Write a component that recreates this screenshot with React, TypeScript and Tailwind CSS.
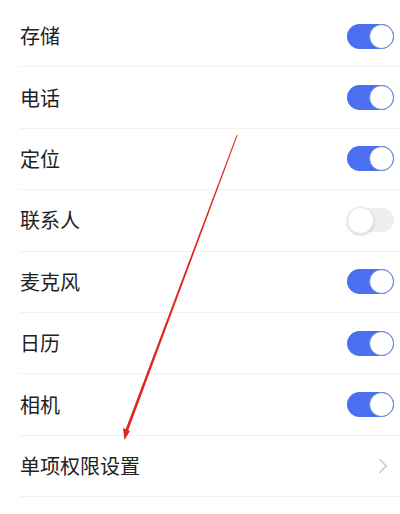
import { ChevronRight } from "lucide-react"

const items = [
  { name: "存储", on: true },
  { name: "电话", on: true },
  { name: "定位", on: true },
  { name: "联系人", on: false },
  { name: "麦克风", on: true },
  { name: "日历", on: true },
  { name: "相机", on: true },
]

function Toggle({ on }: { on: boolean }) {
  if (on) {
    return (
      <div className="flex h-[25px] w-[47px] items-center justify-end rounded-full bg-[#4a6ff0]">
        <div className="h-[25px] w-[25px] rounded-full border-[1.5px] border-[#6a83d6] bg-white" />
      </div>
    )
  }
  return (
    <div className="flex h-[24px] w-[47px] items-center rounded-full bg-[#efefef]">
      <div className="h-[27px] w-[27px] rounded-full border border-[#e6e6e6] bg-white shadow-[0_1px_3px_rgba(0,0,0,0.18)]" />
    </div>
  )
}

export default function App() {
  return (
    <div
      className="relative h-[514px] w-[400px] overflow-hidden bg-white pt-[6px]"
      style={{ fontFamily: '"Noto Sans CJK SC", "Noto Sans", sans-serif' }}
    >
      {items.map((item) => (
        <div key={item.name} className="ml-5 flex h-[61.4px] items-center justify-between border-b border-[#f1f1f1] pr-[6px]">
          <span className="text-[20px] leading-none text-[#222]">{item.name}</span>
          <Toggle on={item.on} />
        </div>
      ))}
      <div className="ml-5 flex h-[61.4px] items-center justify-between border-b border-[#f1f1f1] pr-[4px]">
        <span className="text-[20px] leading-none text-[#222]">单项权限设置</span>
        <ChevronRight className="h-[26px] w-[26px] text-[#c4c4c4]" strokeWidth={1.3} />
      </div>

      {/* red annotation arrow */}
      <svg className="pointer-events-none absolute left-0 top-0" width="400" height="514" viewBox="0 0 400 514">
        <polygon points="236.6,135 237.6,135.3 127.6,432 125,431" fill="#e0261d" />
        <polygon points="123,428 130,431 124.5,440" fill="#e0261d" />
      </svg>
    </div>
  )
}
